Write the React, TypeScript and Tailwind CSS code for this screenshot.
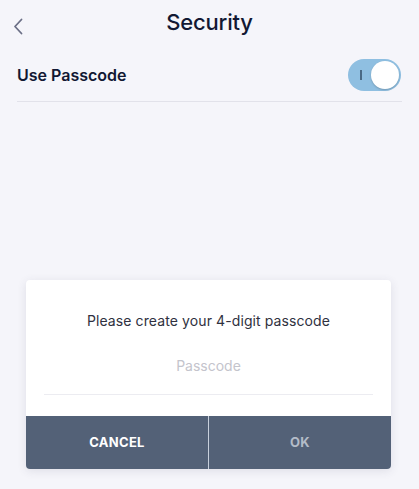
import React, { useState } from 'react';

const App: React.FC = () => {
  const [enabled, setEnabled] = useState(true);

  return (
    <div
      className="relative w-[419px] h-[489px] bg-[#f5f5fa] overflow-hidden"
      style={{ fontFamily: 'Inter, "Liberation Sans", sans-serif' }}
    >
      {/* Header */}
      <header className="relative h-[47px] flex items-center justify-center">
        <button className="absolute left-[9px] top-[14px] p-1 text-[#6b6f86]">
          <svg width="10" height="17" viewBox="0 0 10 17" fill="none">
            <path d="M8.5 1.5 L2 8.5 L8.5 15.5" stroke="currentColor" strokeWidth="1.8" strokeLinecap="round" strokeLinejoin="round" />
          </svg>
        </button>
        <h1 className="text-[22px] font-medium text-[#121833] tracking-[-0.2px] mt-[-3px]">Security</h1>
      </header>

      {/* Setting row */}
      <div className="mx-[17px] h-[55px] flex items-center justify-between border-b border-[#e2e2ea]">
        <span className="text-[16px] font-semibold text-[#121833] pt-[1px]">Use Passcode</span>
        <button
          onClick={() => setEnabled(!enabled)}
          className="relative w-[53px] h-[32px] rounded-full bg-[#8fbfe1] flex items-center mr-[1px] mt-[1px]"
        >
          <span className="absolute left-[12px] top-[11px] w-[1.5px] h-[10px] bg-[#4a6a85]" />
          <span className="absolute right-[2px] top-[2px] w-[28px] h-[28px] rounded-full bg-white shadow-[0_1px_2px_rgba(0,0,0,0.2)]" />
        </button>
      </div>

      {/* Dialog */}
      <div className="absolute left-[26px] top-[280px] w-[365px] rounded-[4px] bg-white shadow-[0_2px_10px_rgba(60,60,90,0.12)] overflow-hidden">
        <div className="pt-[30px] px-[18px]">
          <p className="text-center text-[14px] text-[#2f3140] tracking-[0.1px]">Please create your 4-digit passcode</p>
          <div className="mt-[24px] h-[40px] border-b border-[#ececf1] flex items-start justify-center">
            <input
              placeholder="Passcode"
              className="w-full text-center text-[14px] text-[#2f3140] placeholder:text-[#c4c4cc] outline-none bg-transparent"
            />
          </div>
        </div>
        <div className="mt-[21px] flex h-[53px] bg-[#536177]">
          <button className="flex-1 flex items-center justify-center text-[13px] font-bold text-white tracking-[0.3px]">
            CANCEL
          </button>
          <div className="w-[1px] bg-[#c8d0dc]" />
          <button className="flex-1 flex items-center justify-center text-[13px] font-bold text-[#b4bcc8] tracking-[0.3px]">
            OK
          </button>
        </div>
      </div>
    </div>
  );
};

export default App;
